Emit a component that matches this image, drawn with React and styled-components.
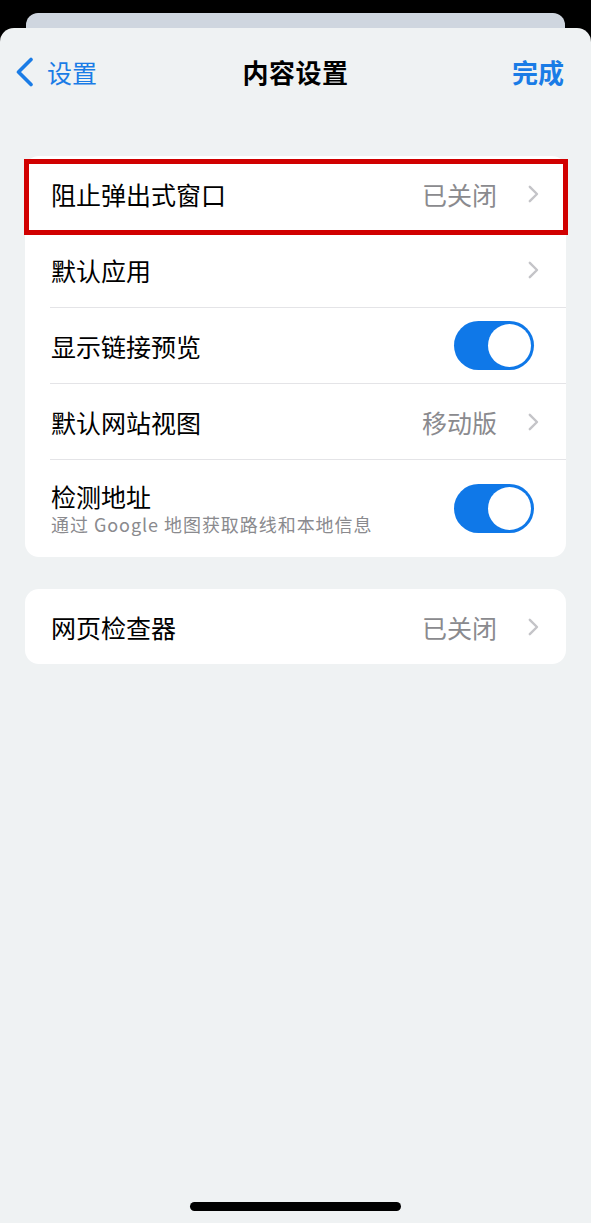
import styled, { createGlobalStyle } from "styled-components";

const GlobalStyle = createGlobalStyle`
    html, body {
        margin: 0;
        padding: 0;
        background: #000;
    }
    body {
        font-family: "Noto Sans CJK SC", "Noto Sans", sans-serif;
        -webkit-font-smoothing: antialiased;
    }
`;

const Screen = styled.div`
    min-height: 1223px;
    padding-top: 13px;
    box-sizing: border-box;
    display: flex;
    flex-direction: column;
`;

const BackCard = styled.div`
    height: 15px;
    margin: 0 26px;
    border-radius: 12px 12px 0 0;
    background: #cfd6df;
`;

const Sheet = styled.div`
    flex: 1;
    display: flex;
    flex-direction: column;
    background: #eff2f3;
    border-radius: 14px 14px 0 0;
`;

const NavBar = styled.div`
    height: 88px;
    display: grid;
    grid-template-columns: 1fr auto 1fr;
    align-items: center;
    padding: 0 27px;
`;

const BackButton = styled.div`
    display: flex;
    align-items: center;
    gap: 13px;
    margin-left: -12px;
    color: #1a7ce6;
    font-size: 25px;
    line-height: 30px;
`;

const NavTitle = styled.div`
    font-size: 26px;
    font-weight: 700;
    color: #000;
    line-height: 30px;
    letter-spacing: 0.5px;
`;

const DoneButton = styled.div`
    justify-self: end;
    font-size: 26px;
    font-weight: 700;
    color: #1a7ce6;
    line-height: 30px;
`;

const Content = styled.div`
    padding: 40px 25px 0;
    display: flex;
    flex-direction: column;
    gap: 32px;
`;

const Card = styled.div`
    background: #fff;
    border-radius: 14px;
`;

const Row = styled.div`
    position: relative;
    height: ${(p) => (p.$tall ? 97 : 75)}px;
    margin-left: 25px;
    padding-right: 27px;
    display: flex;
    align-items: center;
    border-bottom: ${(p) => (p.$last ? "none" : "1px solid #e4e4e7")};
`;

const Labels = styled.div`
    flex: 1;
    display: flex;
    flex-direction: column;
    padding-left: 1px;
`;

const Label = styled.div`
    font-size: 25px;
    line-height: 30px;
    color: #000;
`;

const SubLabel = styled.div`
    font-size: 18px;
    line-height: 24px;
    letter-spacing: 0.95px;
    color: #8a8a8e;
    margin-top: 1px;
`;

const Value = styled.div`
    font-size: 25px;
    line-height: 30px;
    color: #8a8a8e;
    margin-right: 31px;
`;

const Toggle = styled.div`
    width: 80px;
    height: 49px;
    border-radius: 25px;
    background: #0f78e8;
    margin-right: 5px;
    display: flex;
    align-items: center;
    justify-content: ${(p) => (p.$on ? "flex-end" : "flex-start")};
    padding: 0 3px;
    box-sizing: border-box;
`;

const Knob = styled.div`
    width: 43px;
    height: 43px;
    border-radius: 50%;
    background: #fff;
`;

const Highlight = styled.div`
    position: absolute;
    left: -26px;
    right: -2px;
    top: 3px;
    bottom: -4px;
    border: 5px solid #d10000;
    pointer-events: none;
    z-index: 2;
`;

const HomeIndicator = styled.div`
    width: 211px;
    height: 9px;
    border-radius: 5px;
    background: #000;
    margin: auto auto 12px;
`;

function BackChevron() {
    return (
        <svg width="19" height="30" viewBox="0 0 19 30">
            <polyline
                points="16,2.5 3.5,15 16,27.5"
                fill="none"
                stroke="#1a7ce6"
                strokeWidth="3.6"
                strokeLinecap="round"
                strokeLinejoin="round"
            />
        </svg>
    );
}

function Chevron() {
    return (
        <svg width="11" height="18" viewBox="0 0 11 18">
            <polyline
                points="1.8,1.8 9,9 1.8,16.2"
                fill="none"
                stroke="#c4c4c8"
                strokeWidth="2.4"
                strokeLinecap="round"
                strokeLinejoin="round"
            />
        </svg>
    );
}

const mainRows = [
    { label: "阻止弹出式窗口", value: "已关闭", chevron: true, highlight: true },
    { label: "默认应用", chevron: true },
    { label: "显示链接预览", toggle: true },
    { label: "默认网站视图", value: "移动版", chevron: true },
    { label: "检测地址", sub: "通过 Google 地图获取路线和本地信息", toggle: true },
];

function SettingRow({ row, last }) {
    return (
        <Row $tall={!!row.sub} $last={last}>
            <Labels>
                <Label>{row.label}</Label>
                {row.sub && <SubLabel>{row.sub}</SubLabel>}
            </Labels>
            {row.value && <Value>{row.value}</Value>}
            {row.chevron && <Chevron />}
            {row.toggle && (
                <Toggle $on>
                    <Knob />
                </Toggle>
            )}
            {row.highlight && <Highlight />}
        </Row>
    );
}

export default function App() {
    return (
        <>
            <GlobalStyle />
            <Screen>
                <BackCard />
                <Sheet>
                    <NavBar>
                        <BackButton>
                            <BackChevron />
                            <span>设置</span>
                        </BackButton>
                        <NavTitle>内容设置</NavTitle>
                        <DoneButton>完成</DoneButton>
                    </NavBar>

                    <Content>
                        <Card>
                            {mainRows.map((row, i) => (
                                <SettingRow key={row.label} row={row} last={i === mainRows.length - 1} />
                            ))}
                        </Card>

                        <Card>
                            <SettingRow row={{ label: "网页检查器", value: "已关闭", chevron: true }} last />
                        </Card>
                    </Content>

                    <HomeIndicator />
                </Sheet>
            </Screen>
        </>
    );
}
